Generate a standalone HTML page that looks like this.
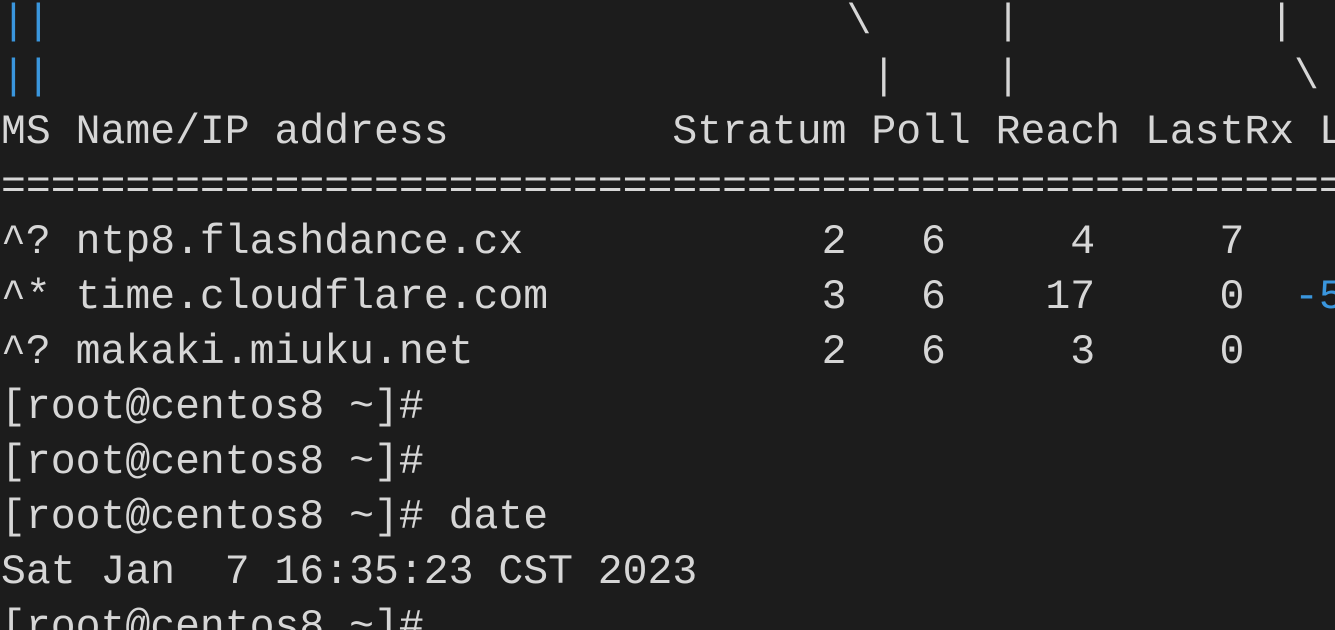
<!DOCTYPE html>
<html><head><meta charset="utf-8"><style>
html,body{margin:0;padding:0;background:#1c1c1c;width:1335px;height:630px;overflow:hidden}
#w{position:absolute;left:0;top:0;width:1335px;height:630px;overflow:hidden}
pre{position:absolute;left:1px;top:-5.5px;margin:0;font-family:"Liberation Mono",monospace;font-size:41.45px;line-height:55px;color:#d6d6d6;white-space:pre}
.c{color:#3a96dd}
</style></head><body><div id="w">
<pre><span class="c">||</span>                                \     |          |
<span class="c">||</span>                                 |    |           \
MS Name/IP address         Stratum Poll Reach LastRx L
======================================================
^? ntp8.flashdance.cx            2   6     4     7
^* time.cloudflare.com           3   6    17     0  <span class="c">-5</span>
^? makaki.miuku.net              2   6     3     0
[root@centos8 ~]#
[root@centos8 ~]#
[root@centos8 ~]# date
Sat Jan  7 16:35:23 CST 2023
[root@centos8 ~]#</pre>
</div></body></html>
